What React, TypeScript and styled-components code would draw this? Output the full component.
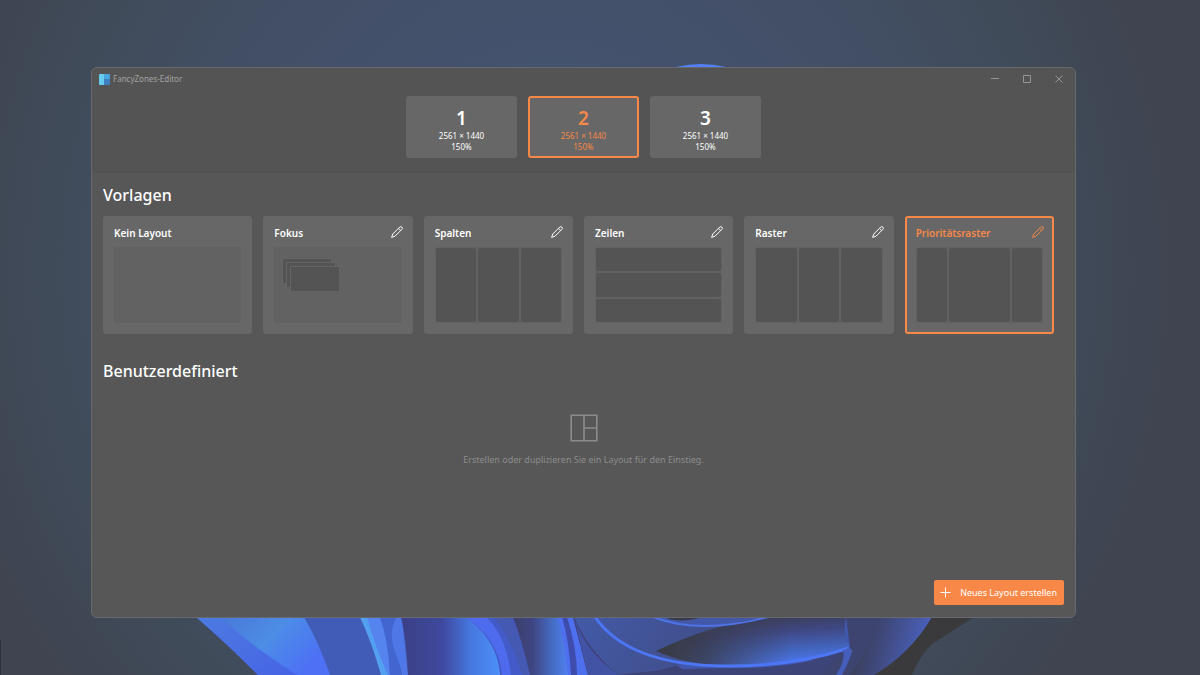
import React, { useState } from "react";
import styled, { createGlobalStyle } from "styled-components";

const GlobalStyle = createGlobalStyle`
  * { box-sizing: border-box; }
  body { margin: 0; }
  button { font: inherit; color: inherit; border: 0; padding: 0; background: none; cursor: pointer; }
`;

const accent = "#f78848";

const Desktop = styled.div`
  position: relative;
  min-height: 100vh;
  display: flex;
  padding: 67px 124px 57px 91px;
  overflow: hidden;
  background: radial-gradient(ellipse 52% 100% at 46% 40%, #445677 0%, #434f66 55%, #404b5a 80%, #3f4450 100%);
  font-family: "Noto Sans", "Segoe UI", sans-serif;
  color: #ffffff;
`;

const WallpaperArt = styled.svg`
  position: absolute;
  inset: 0;
  width: 100%;
  height: 100%;
`;

const EditorWindow = styled.main`
  position: relative;
  flex: 1;
  min-width: 0;
  display: flex;
  flex-direction: column;
  background: #575757;
  border: 1px solid #666a70;
  border-radius: 6px;
  overflow: hidden;
`;

const Header = styled.header`
  background: #545454;
  border-bottom: 1px solid #525252;
  padding-bottom: 14px;
`;

const TitleBar = styled.div`
  display: flex;
  align-items: center;
  height: 22px;
  padding: 0 11px 0 7px;
  color: #a3a3a3;
`;

const AppTitle = styled.span`
  flex: 1;
  margin-left: 3px;
  font-size: 8px;
  line-height: 12px;
`;

const WindowControls = styled.div`
  display: flex;
  gap: 21px;
`;

const ControlButton = styled.button`
  display: flex;
  align-items: center;
  justify-content: center;
  width: 11px;
  height: 12px;
  color: #959595;
`;

const MonitorList = styled.div`
  display: flex;
  justify-content: center;
  gap: 11px;
  padding-top: 6px;
`;

const MonitorCard = styled.button<{ $selected: boolean }>`
  display: flex;
  flex-direction: column;
  align-items: center;
  width: 111px;
  height: 62px;
  padding-top: 8px;
  background: #676767;
  border: 2px solid ${(p) => (p.$selected ? accent : "transparent")};
  border-radius: 3px;
  color: ${(p) => (p.$selected ? accent : "#ffffff")};
`;

const MonitorNumber = styled.span`
  font-size: 19px;
  font-weight: 600;
  line-height: 24px;
`;

const MonitorInfo = styled.span`
  font-size: 8px;
  line-height: 11px;
`;

const Content = styled.div`
  flex: 1;
  display: flex;
  flex-direction: column;
  padding: 11px 11px 12px;
`;

const SectionTitle = styled.h2`
  margin: 0;
  font-size: 16px;
  font-weight: 500;
  line-height: 22px;
`;

const TemplateGrid = styled.div`
  display: grid;
  grid-template-columns: repeat(6, minmax(0, 1fr));
  gap: 11px;
  margin: 10px 10px 26px 0;
`;

const TemplateCard = styled.article<{ $selected: boolean }>`
  height: 118px;
  padding: 7px 9px 9px;
  background: #676767;
  border: 2px solid ${(p) => (p.$selected ? accent : "transparent")};
  border-radius: 3px;
  color: ${(p) => (p.$selected ? accent : "#ffffff")};
`;

const CardHeader = styled.div`
  display: flex;
  align-items: center;
  justify-content: space-between;
  height: 16px;
  margin-bottom: 6px;
`;

const CardTitle = styled.button`
  font-size: 10px;
  font-weight: 600;
  line-height: 16px;
`;

const EditButton = styled.button`
  display: flex;
  align-items: center;
  justify-content: center;
  width: 14px;
  height: 16px;
  padding-bottom: 2px;
  margin-right: -2px;
`;

const Preview = styled.div<{ $columns?: string; $rows?: string }>`
  display: grid;
  grid-template-columns: ${(p) => p.$columns ?? "1fr"};
  grid-template-rows: ${(p) => p.$rows ?? "1fr"};
  gap: 2px;
  height: 76px;
  padding: 1px;
  background: #626262;
  border-radius: 3px;
`;

const Zone = styled.div`
  background: #545454;
  border-radius: 2px;
`;

const FocusStack = styled.div`
  display: grid;
  grid-template-columns: repeat(2, 4px) 42px repeat(2, 4px);
  grid-template-rows: repeat(2, 4px) 18px repeat(2, 4px);
  margin: 10px 0 0 7px;
`;

const FocusZone = styled.div<{ $level: number }>`
  grid-area: ${(p) => `${p.$level} / ${p.$level} / span 3 / span 3`};
  background: #545454;
  border: 1px solid #646464;
`;

const EmptyState = styled.div`
  flex: 1;
  display: flex;
  flex-direction: column;
  align-items: center;
  padding-top: 32px;
  color: #8c8c8c;
`;

const EmptyText = styled.p`
  margin: 10px 0 0;
  font-size: 9px;
  line-height: 16px;
`;

const Footer = styled.footer`
  display: flex;
  justify-content: flex-end;
`;

const CreateButton = styled.button`
  display: flex;
  align-items: center;
  gap: 9px;
  height: 25px;
  padding: 0 7px 0 6px;
  background: ${accent};
  border-radius: 2px;
  font-size: 9px;
  line-height: 14px;
  white-space: nowrap;
`;

function Wallpaper() {
  return (
    <WallpaperArt viewBox="0 0 1200 675" preserveAspectRatio="xMidYMid slice" aria-hidden="true">
      <defs>
        <linearGradient id="petalA" x1="0" y1="0" x2="1" y2="0.5">
          <stop offset="0" stopColor="#4a78d8" />
          <stop offset="0.5" stopColor="#4c8de6" />
          <stop offset="1" stopColor="#4d70f5" />
        </linearGradient>
        <linearGradient id="petalB" x1="0" y1="0" x2="1" y2="1">
          <stop offset="0" stopColor="#4d7be0" />
          <stop offset="1" stopColor="#4560e6" />
        </linearGradient>
        <linearGradient id="inner" x1="0" y1="0" x2="1" y2="0">
          <stop offset="0" stopColor="#3b4086" />
          <stop offset="0.4" stopColor="#3f489e" />
          <stop offset="0.68" stopColor="#4678e0" />
          <stop offset="1" stopColor="#4d93fb" />
        </linearGradient>
        <linearGradient id="shade" x1="0" y1="0" x2="1" y2="0">
          <stop offset="0" stopColor="#3d3f6a" />
          <stop offset="0.35" stopColor="#3e4683" />
          <stop offset="0.75" stopColor="#4770cb" />
          <stop offset="1" stopColor="#5180f2" />
        </linearGradient>
        <linearGradient id="fold" x1="0" y1="0" x2="1" y2="0.15">
          <stop offset="0" stopColor="#435aa8" />
          <stop offset="0.45" stopColor="#41508f" />
          <stop offset="1" stopColor="#3d4374" />
        </linearGradient>
        <linearGradient id="sweep" x1="0.35" y1="0" x2="0.6" y2="1">
          <stop offset="0" stopColor="#3b3c50" />
          <stop offset="0.35" stopColor="#3f4884" />
          <stop offset="0.75" stopColor="#4468c5" />
          <stop offset="1" stopColor="#4c78f5" />
        </linearGradient>
        <linearGradient id="rim" x1="0" y1="0" x2="1" y2="0.2">
          <stop offset="0" stopColor="#3a3b42" />
          <stop offset="0.4" stopColor="#3e4674" />
          <stop offset="1" stopColor="#4b62c0" />
        </linearGradient>
        <linearGradient id="core" x1="0" y1="0" x2="1" y2="0">
          <stop offset="0" stopColor="#38393f" stopOpacity="1" />
          <stop offset="0.25" stopColor="#393b4a" stopOpacity="0.8" />
          <stop offset="0.7" stopColor="#3b3d51" stopOpacity="0" />
        </linearGradient>
      </defs>
      <ellipse cx="701" cy="100" rx="62" ry="36" fill="#5580f5" />
      <path d="M0 640h1v35H0z" fill="#2e3238" />
      <path d="M850 617H974L932 644Q920 655 912 675H840z" fill="#3a3a3c" />
      <path d="M196 617H860V675H258Q228 645 196 617z" fill="#4258ae" />
      <path d="M196 617H305L332 675H258Q226 643 196 617z" fill="url(#petalB)" />
      <path d="M300 617H362L382 675H330Q318 643 300 617z" fill="#415cb6" />
      <path d="M220 617H304Q320 645 330 675H297Q254 648 220 617z" fill="url(#petalA)" />
      <path d="M360 617H403V675H382Q374 643 360 617z" fill="#5584ee" />
      <path d="M360 617H367Q376 650 388 675H381Q372 643 360 617z" fill="#54a0f0" />
      <path d="M380 617H402V675H390Q388 640 380 617z" fill="#4265cf" />
      <path d="M397 617Q387 633 396 654L403 675H408L402 617z" fill="#4f78e6" />
      <path d="M401 617H474Q500 637 504 675H408Q407 642 401 617z" fill="url(#inner)" />
      <path d="M466 617H513L531 675H500Q498 641 466 617z" fill="#435bc8" />
      <path d="M466 617H486Q506 635 511 675H502Q499 640 466 617z" fill="#4e6bee" />
      <path d="M494 617H513L530 675H522Q512 641 494 617z" fill="#4558b2" />
      <path d="M513 617H560L569 675H530Q522 640 513 617z" fill="url(#shade)" />
      <path d="M557 617H573L588 675H568Q565 640 557 617z" fill="#4f70ee" />
      <path d="M562 617H567Q577 648 577 675H571Q569 640 562 617z" fill="#3e4cad" />
      <path d="M573 617H612L690 675H588z" fill="#3d4174" />
      <path d="M574 617Q585 651 618 675H588z" fill="#4253a5" />
      <path d="M594 617H770L850 647V660H700L640 675H618Q588 650 574 617z" fill="url(#fold)" />
      <path d="M652 617H768Q710 629 684 624Q664 622 652 617z" fill="#4358a8" />
      <path d="M656 651Q712 624 770 617H846Q842 634 850 647Q792 669 724 666Q684 664 656 651z" fill="url(#sweep)" />
      <path d="M656 651Q712 624 770 617H846Q842 634 850 647Q792 669 724 666Q684 664 656 651z" fill="url(#core)" />
      <path d="M653 617Q700 635 768 617" fill="none" stroke="#4e73e6" strokeWidth="2" />
      <path d="M664 617Q678 624 704 617z" fill="#393a49" />
      <path d="M618 675Q670 668 736 668Q806 668 847 649V675z" fill="#3d4477" />
      <path d="M846 617H882Q871 648 851 675H822Q836 658 841 650L850 647z" fill="#3d4470" />
      <path d="M595 617Q628 665 724 666Q792 667 849 648" fill="none" stroke="#4d76f5" strokeWidth="3" />
      <path d="M843 650Q855 645 851 655Q847 666 842 675H836Q846 660 843 650z" fill="#465db9" />
      <path d="M881 617H932Q910 654 874 675H850Q870 648 881 617z" fill="url(#rim)" />
    </WallpaperArt>
  );
}

function AppIcon() {
  return (
    <svg width="11" height="11" viewBox="0 0 11 11" aria-hidden="true">
      <rect width="11" height="11" rx="1" fill="#3f7fc0" />
      <path d="M1 0H5V11H1a1 1 0 0 1-1-1V1a1 1 0 0 1 1-1z" fill="#66cdf2" />
      <path d="M5 0h5a1 1 0 0 1 1 1v4H5z" fill="#48a5dd" />
    </svg>
  );
}

function PencilIcon() {
  return (
    <svg width="12" height="12" viewBox="0 0 12 12" fill="none" stroke="currentColor" strokeWidth="1" strokeLinejoin="round" aria-hidden="true">
      <path d="M8.7 1.1a1.55 1.55 0 0 1 2.2 2.2L4 10.2 0.6 11.4 1.8 8z" />
      <path d="M7.5 2.3l2.2 2.2" />
    </svg>
  );
}

function LayoutIcon() {
  return (
    <svg width="28" height="28" viewBox="0 0 28 28" fill="none" stroke="currentColor" strokeWidth="1.6" aria-hidden="true">
      <path d="M1.2 1.2h25.6v25.6H1.2zM14 1.2v25.6M14 14h12.8" />
    </svg>
  );
}

const monitors = [1, 2, 3];

type Template = { name: string; zones: number; columns?: string; rows?: string; editable: boolean; focus?: boolean };

const templates: Template[] = [
  { name: "Kein Layout", zones: 0, editable: false },
  { name: "Fokus", zones: 0, editable: true, focus: true },
  { name: "Spalten", zones: 3, columns: "1fr 1fr 1fr", editable: true },
  { name: "Zeilen", zones: 3, rows: "1fr 1fr 1fr", editable: true },
  { name: "Raster", zones: 3, columns: "1fr 1fr 1fr", editable: true },
  { name: "Prioritätsraster", zones: 3, columns: "1fr 2fr 1fr", editable: true },
];

export default function App() {
  const [monitor, setMonitor] = useState(2);
  const [template, setTemplate] = useState("Prioritätsraster");

  return (
    <Desktop>
      <GlobalStyle />
      <Wallpaper />
      <EditorWindow>
        <Header>
          <TitleBar>
            <AppIcon />
            <AppTitle>FancyZones-Editor</AppTitle>
            <WindowControls>
              <ControlButton aria-label="Minimieren">
                <svg width="8" height="8" viewBox="0 0 8 8" stroke="currentColor"><path d="M0 3.5h8" /></svg>
              </ControlButton>
              <ControlButton aria-label="Maximieren">
                <svg width="8" height="8" viewBox="0 0 8 8" fill="none" stroke="currentColor"><path d="M.5.5h7v7h-7z" /></svg>
              </ControlButton>
              <ControlButton aria-label="Schließen">
                <svg width="8" height="8" viewBox="0 0 8 8" stroke="currentColor"><path d="M.5.5l7 7M7.5.5l-7 7" /></svg>
              </ControlButton>
            </WindowControls>
          </TitleBar>
          <MonitorList>
            {monitors.map((n) => (
              <MonitorCard key={n} $selected={n === monitor} aria-pressed={n === monitor} onClick={() => setMonitor(n)}>
                <MonitorNumber>{n}</MonitorNumber>
                <MonitorInfo>2561 × 1440</MonitorInfo>
                <MonitorInfo>150%</MonitorInfo>
              </MonitorCard>
            ))}
          </MonitorList>
        </Header>
        <Content>
          <SectionTitle>Vorlagen</SectionTitle>
          <TemplateGrid>
            {templates.map((t) => (
              <TemplateCard key={t.name} $selected={t.name === template}>
                <CardHeader>
                  <CardTitle aria-pressed={t.name === template} onClick={() => setTemplate(t.name)}>
                    {t.name}
                  </CardTitle>
                  {t.editable && (
                    <EditButton aria-label={`${t.name} bearbeiten`}>
                      <PencilIcon />
                    </EditButton>
                  )}
                </CardHeader>
                <Preview $columns={t.columns} $rows={t.rows}>
                  {t.focus && (
                    <FocusStack>
                      <FocusZone $level={1} />
                      <FocusZone $level={2} />
                      <FocusZone $level={3} />
                    </FocusStack>
                  )}
                  {Array.from({ length: t.zones }, (_, i) => (
                    <Zone key={i} />
                  ))}
                </Preview>
              </TemplateCard>
            ))}
          </TemplateGrid>
          <SectionTitle>Benutzerdefiniert</SectionTitle>
          <EmptyState>
            <LayoutIcon />
            <EmptyText>Erstellen oder duplizieren Sie ein Layout für den Einstieg.</EmptyText>
          </EmptyState>
          <Footer>
            <CreateButton>
              <svg width="11" height="11" viewBox="0 0 11 11" stroke="currentColor" aria-hidden="true"><path d="M.5 5.5h10M5.5.5v10" /></svg>
              Neues Layout erstellen
            </CreateButton>
          </Footer>
        </Content>
      </EditorWindow>
    </Desktop>
  );
}
